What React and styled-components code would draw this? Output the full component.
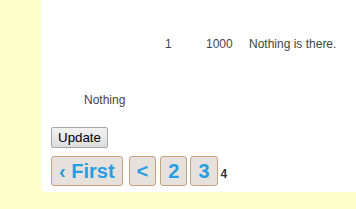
import React from 'react';
import styled, { createGlobalStyle } from 'styled-components';

const GlobalStyle = createGlobalStyle`
  html, body {
    margin: 0;
    padding: 0;
    background-color: #ffffcc;
    font-family: "Liberation Sans", Arial, sans-serif;
  }
`;

const Panel = styled.main`
  margin-left: 41px;
  padding: 37px 0 6px 10px;
  background-color: #ffffff;
  border-bottom-left-radius: 5px;
  color: #444444;
  font-size: 12px;
`;

const Row = styled.div`
  display: flex;
  margin-left: 114px;
  height: 14px;
  line-height: 14px;
`;

const Cell = styled.span`
  width: ${(p) => (p.$width ? `${p.$width}px` : 'auto')};
  flex-shrink: 0;
`;

const Note = styled.p`
  margin: 42px 0 0 33px;
  line-height: 14px;
`;

const UpdateButton = styled.button`
  display: block;
  margin-top: 20px;
  height: 21px;
  padding: 0 6px;
  font-family: "Liberation Sans", Arial, sans-serif;
  font-size: 13.33px;
  color: #000000;
  background: linear-gradient(#f2f2f2, #dddddd);
  border: 1px solid #a8a8a8;
  border-radius: 2px;
`;

const Pager = styled.nav`
  display: flex;
  align-items: baseline;
  margin-top: 8px;
`;

const PageLink = styled.a`
  display: inline-block;
  margin-right: ${(p) => p.$after}px;
  padding: 3px 7px;
  height: 22px;
  line-height: 22px;
  font-size: 20px;
  font-weight: bold;
  color: #279ee3;
  text-decoration: none;
  background-color: #e6e1dd;
  border: 1px solid #c4a382;
  border-radius: 3px;
`;

const Current = styled.span`
  font-size: 12px;
  font-weight: bold;
  color: #333333;
`;

function App() {
  return (
    <>
      <GlobalStyle />
      <Panel>
        <Row>
          <Cell $width={41}>1</Cell>
          <Cell $width={43}>1000</Cell>
          <Cell>Nothing is there.</Cell>
        </Row>
        <Note>Nothing</Note>
        <UpdateButton type="button">Update</UpdateButton>
        <Pager>
          <PageLink href="#" $after={6}>‹ First</PageLink>
          <PageLink href="#" $after={4}>&lt;</PageLink>
          <PageLink href="#" $after={3}>2</PageLink>
          <PageLink href="#" $after={3}>3</PageLink>
          <Current>4</Current>
        </Pager>
      </Panel>
    </>
  );
}

export default App;
